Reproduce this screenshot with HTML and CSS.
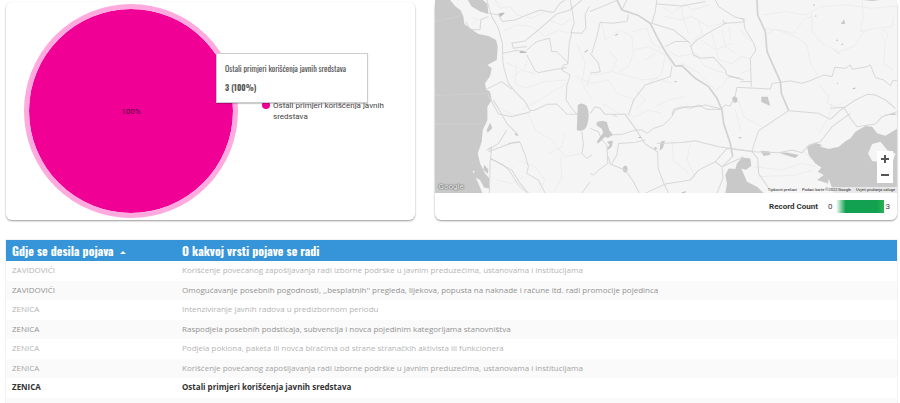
FILE: index.html
```html
<!DOCTYPE html>
<html lang="bs">
<head>
  <meta charset="UTF-8">
  <meta name="viewport" content="width=device-width, initial-scale=1">
  <title>Javni resursi</title>
  <link rel="stylesheet" href="styles.css">
</head>
<body>
  <main class="report">
    <div class="cards">
      <section class="card pie-card">
        <div class="pie-wrap">
          <div class="pie"><span>100%</span></div>
          <div class="tooltip">
            <p>Ostali primjeri korišćenja javnih sredstava</p>
            <strong>3 (100%)</strong>
          </div>
        </div>
        <div class="legend">
          <span class="dot"></span>
          <span>Ostali primjeri korišćenja javnih sredstava</span>
        </div>
      </section>

      <section class="card map-card">
        <div class="map">
          <svg class="map-svg" viewBox="0 0 1386 579" preserveAspectRatio="xMidYMid slice" aria-hidden="true">
            <!-- minor roads -->
            <g class="minor">
              <path d="M180 0L195 25 225 20 245 45 290 55 330 35 350 40"/>
              <path d="M205 92L245 75 290 80 330 110 370 90 400 100"/>
              <path d="M215 190L245 200 240 250 270 265 330 245 395 240"/>
              <path d="M225 235L260 210 300 222 M270 205L275 180"/>
              <path d="M190 320L230 345 280 340 300 390 350 420 390 470 440 460"/>
              <path d="M260 330L330 290 395 250 M340 60L380 75 405 60"/>
              <path d="M250 480L300 500 330 540 310 579 M185 540L230 550 265 530"/>
              <path d="M375 470L380 530 355 579 M390 400L380 440 340 460"/>
              <path d="M420 230L470 250 520 240 545 280 600 300"/>
              <path d="M425 130L450 190 440 250 470 300 M470 210L455 260"/>
              <path d="M500 70L510 120 555 90 590 110 595 160 580 200 550 215"/>
              <path d="M480 225L530 215 570 225 620 240 665 235 710 250"/>
              <path d="M590 95L635 85 650 130 690 150 710 200"/>
              <path d="M595 150L640 140 690 165 680 220 640 250"/>
              <path d="M630 180L660 160 M520 150L545 180 530 215"/>
              <path d="M680 20L710 40 750 10 770 30 820 15"/>
              <path d="M690 50L740 60 770 50 820 80 860 70"/>
              <path d="M740 20L745 60 760 100 M790 60L800 100 775 120"/>
              <path d="M700 155L730 170 780 160 810 200 870 220"/>
              <path d="M740 190L785 215 840 270 860 260 880 230"/>
              <path d="M800 120L840 150 890 130 M860 90L870 140 900 160"/>
              <path d="M830 100L850 180 890 190 920 170 M880 80L885 120"/>
              <path d="M600 270L630 300 600 330 M660 320L700 300 750 290"/>
              <path d="M500 310L560 345 M560 340L600 350 640 330 680 340"/>
              <path d="M710 420L715 480 760 520 M765 430L755 480 780 530"/>
              <path d="M910 300L925 350 980 380 M900 330L915 390"/>
              <path d="M985 45L1050 35 1110 45 1160 20 1230 15 1310 25 1386 18"/>
              <path d="M985 85L1030 90 1075 100 1110 55 1130 50"/>
              <path d="M1000 100L1020 88 1090 115 1115 135 1125 190 1145 225"/>
              <path d="M1130 40L1130 95 1160 130 1210 155 1255 140 1290 90"/>
              <path d="M1280 0L1283 55 1275 95 1320 85 1370 80 1375 50"/>
              <path d="M1338 90Q1360 90 1355 115Q1340 125 1338 100M1350 120L1345 190 1375 210"/>
              <path d="M1150 250L1180 290 1175 310 1200 320 1240 300"/>
              <path d="M955 500L1040 510 1100 490 1145 500 M970 530L1080 525 1130 510"/>
              <path d="M1100 450L1130 480 M1150 400L1180 350 1190 310"/>
              <path d="M915 90L940 120 M915 170L945 175 M915 220L945 210"/>
              <path d="M15 10L30 12 M110 50L125 60 110 75 M120 60L145 55"/>
            </g>
            <!-- water -->
            <g class="water">
              <path d="M45 0L60 18 77 32 85 50 88 72 105 85 130 102 160 108 183 120 188 140 185 180 157 195 170 205 165 228 150 250 153 268 165 275 170 300 157 320 157 360 143 390 140 425 128 460 135 490 150 520 163 535 162 565 147 562 135 540 122 532 130 550 142 579H0V0Z"/>
              <path d="M98 0H143L157 13 160 42 135 35 110 20Z"/>
              <path d="M165 368L172 384 158 398 155 390Z M147 494L160 508 158 522 145 508Z"/>
              <path d="M428 315Q440 304 455 318Q466 345 455 378Q448 396 425 391L426 360Z"/>
              <path d="M485 366L502 362 515 366 522 390 533 404 518 414 510 410 488 431 485 424 504 398 500 386 484 376Z"/>
              <path d="M515 425L533 421 530 440 518 450 516 443 524 435Z"/>
              <ellipse cx="570" cy="507" rx="7" ry="10"/>
              <path d="M676 425L689 421 683 444 673 452Z M658 440L666 444 662 450 657 446Z"/>
              <path d="M890 294L898 288 906 294 906 306 896 309Z"/>
              <path d="M978 290L997 290 1005 318 978 306Z"/>
              <path d="M1216 72L1226 58 1229 72Z M1187 144L1218 165 1208 160Z M1280 0H1335L1310 3Z"/>
              <path d="M720 80L727 76 M1345 345L1375 340 1386 345Z"/>
              <path d="M870 579L875 550 870 525 880 505 900 507 905 490 920 472 945 475 948 497 932 509 918 505 935 545 965 560 985 579Z"/>
              <path d="M975 452L1003 454 1005 464 985 468Z M1030 457L1055 457 1090 465 1080 474 1045 463Z"/>
              <path d="M1115 440L1140 428 1175 440 1215 430 1245 415 1260 395 1290 378 1310 380 1325 400 1350 407 1386 385V579H1195L1180 535 1178 550 1145 540 1165 525 1147 515 1158 502 1140 490 1120 465Z"/>
            </g>
            <g class="land">
              <path d="M1153 439L1180 425 1210 410 1244 397 1240 415 1210 440 1180 447Z"/>
              <path d="M1298 460L1310 432 1335 425 1355 450 1380 460 1370 490 1310 483Z"/>
              <circle cx="116" cy="515" r="3"/>
            </g>
            <path class="sealine" d="M0 65L75 48M0 287L165 280M0 372H155"/>
            <!-- main roads -->
            <g class="road">
              <path d="M155 0L170 50 190 85 202 130 203 180 207 205 220 250 240 275 270 305 285 332 300 330 335 313 365 312 395 342 425 343"/>
              <path d="M203 160L240 152 275 155 M230 127L235 145 275 140"/>
              <path d="M160 40L190 45 202 65 240 60 275 45 315 30 355 38 375 10 390 0"/>
              <path d="M230 130L270 123 310 90 365 42 405 30 440 0"/>
              <path d="M153 268L200 245 230 268 M160 285L190 342 230 350 270 340 285 335"/>
              <path d="M175 300L198 340 215 370 250 405 M215 390L190 430 160 450"/>
              <path d="M160 455L200 440 235 427 255 425 M165 475L230 510 255 550 280 579"/>
              <path d="M155 450L170 440 165 490 163 579"/>
              <path d="M465 340L480 320 495 325 510 343 570 343 600 385 630 432 667 455 669 505 688 555 700 579"/>
              <path d="M465 160L490 190 495 215 465 220"/>
              <path class="wide" d="M545 0L560 30 610 47 645 70 665 110 690 155 720 198 740 197 780 235 820 260 845 295 860 330 865 370 885 430 892 470"/>
              <path d="M560 30L575 0M580 45L575 65 530 70 495 67 485 110 470 160"/>
              <path d="M665 0L660 35 650 70 715 90 765 130 M690 140L720 125 760 125"/>
              <path d="M665 12L740 18 810 5 M465 35L550 0"/>
              <path d="M765 140L785 120 835 90 875 68 M765 135L775 165 795 175 835 172 870 210 875 225 925 240"/>
              <path d="M710 200L705 230 630 255 595 300 580 345"/>
              <path d="M665 430L740 427 780 422 850 440 900 447 955 454"/>
              <path d="M520 470L525 492 570 510 595 545 612 579 M630 579L690 552 765 540 790 510 840 485 875 445 955 455"/>
              <path d="M840 485L860 500 925 470 M892 470L860 500 863 535 845 579"/>
              <path d="M550 430L600 427 630 420 M550 430L545 465 530 490"/>
              <path class="wide" d="M965 0L967 45 990 95 995 155 1035 245 1038 280 1060 332"/>
              <path d="M1060 332L1025 355 970 392 955 435 950 455 967 475 970 520 1010 579"/>
              <path d="M1060 332L1150 340 1185 358 1215 330 1260 300 1295 283 1320 285 1350 300 1380 325"/>
              <path d="M1185 325L1225 322 1245 355 1265 380 1320 372 1340 350 1386 335"/>
              <path d="M955 455L1030 458 1070 450 1100 458 1120 435 1155 425 1190 380 1245 340"/>
            </g>
            <!-- borders -->
            <g class="border">
              <path d="M92 65L105 88 135 90 137 60 160 50"/>
              <path d="M405 0L412 35 417 70 407 98 440 100 452 85 450 45 462 20"/>
              <path d="M410 98L402 130 400 165 398 192 385 195 380 210 405 225 395 258 393 300 410 325 425 342"/>
              <path d="M400 190L365 155 350 155 343 115 305 125 275 150 M275 165L300 212 310 218 350 210 395 203"/>
              <path d="M440 395L445 435 440 460 455 475 470 465"/>
              <path d="M165 475L180 482 205 495 225 515 250 555 275 579 M220 430L255 427 270 465 280 500 275 520 310 540 330 579"/>
              <path d="M465 385L490 395 500 420 515 435 518 490 490 510 475 525 465 520"/>
              <path d="M525 405L560 403 600 390 620 390 635 400 655 385 685 375 710 350 720 330 755 320 785 320 810 315 855 326"/>
              <path d="M710 345L715 328 740 320 765 325 790 315 815 328 855 328 870 315 885 318 900 285 905 262 1005 267 1010 250 1035 247"/>
              <path d="M840 0L850 20 900 52 925 58 928 85 955 130 962 150 945 175 948 260"/>
              <path d="M863 60L865 70 905 68 928 65 M880 230L915 235 M915 245H947 M915 55L930 58"/>
              <path d="M1035 247L1065 243 1100 250 1130 240 1165 225 1190 230 1198 202 1230 205 1245 195 1250 208 1295 200 1305 195 1320 233 1345 240 1365 257 1372 242 1386 242"/>
              <path d="M440 579L465 545 M535 345L545 350"/>
            </g>
            <!-- towns -->
            <g class="town">
              <path d="M192 42L207 39 197 49Z M258 154L272 158 255 158Z M240 400L247 408M540 107L548 102M718 245H724M448 157L458 150M1135 13L1137 18M1139 48H1143M1203 121H1208M1218 133H1223M1205 250H1208M1252 266L1260 264M610 412H618M740 578L752 575M910 413H918"/>
            </g>
          </svg>
          <span class="google">Google</span>
          <div class="zoom">
            <button type="button" aria-label="Zoom in"><svg viewBox="0 0 16 16"><path d="M8 4v8M4 8h8"/></svg></button>
            <button type="button" aria-label="Zoom out"><svg viewBox="0 0 16 16"><path d="M4 8h8"/></svg></button>
          </div>
          <div class="attribution">
            <a href="#">Tipkovni prečaci</a>
            <span>Podaci karte ©2022 Google</span>
            <a href="#">Uvjeti pružanja usluge</a>
          </div>
        </div>
        <div class="scale">
          <strong>Record Count</strong>
          <span>0</span>
          <div class="scale-bar"></div>
          <span>3</span>
        </div>
      </section>
    </div>

    <div class="table-wrap">
      <table>
        <thead>
          <tr>
            <th class="place">Gdje se desila pojava <span class="sort"></span></th>
            <th>O kakvoj vrsti pojave se radi</th>
          </tr>
        </thead>
        <tbody>
          <tr><td>ZAVIDOVIĆI</td><td>Korišćenje povećanog zapošljavanja radi izborne podrške u javnim preduzećima, ustanovama i institucijama</td></tr>
          <tr class="mid"><td>ZAVIDOVIĆI</td><td>Omogućavanje posebnih pogodnosti, ,,besplatnih'' pregleda, lijekova, popusta na naknade i račune itd. radi promocije pojedinca</td></tr>
          <tr><td>ZENICA</td><td>Intenziviranje javnih radova u predizbornom periodu</td></tr>
          <tr class="mid"><td>ZENICA</td><td>Raspodjela posebnih podsticaja, subvencija i novca pojedinim kategorijama stanovništva</td></tr>
          <tr><td>ZENICA</td><td>Podjela poklona, paketa ili novca biračima od strane stranačkih aktivista ili funkcionera</td></tr>
          <tr><td>ZENICA</td><td>Korišćenje povećanog zapošljavanja radi izborne podrške u javnim preduzećima, ustanovama i institucijama</td></tr>
          <tr class="selected"><td>ZENICA</td><td>Ostali primjeri korišćenja javnih sredstava</td></tr>
        </tbody>
      </table>
      <div class="table-end"></div>
    </div>
  </main>
</body>
</html>
```

FILE: styles.css
```css
* { margin: 0; padding: 0; box-sizing: border-box; }
html { overflow: hidden; }
body {
  font-family: Roboto, sans-serif;
  font-size: 8px;
  background: #fff;
  color: #444;
}
button { border: none; cursor: pointer; }
a { color: inherit; text-decoration: none; }
.report { padding: 0 3px 0 6px; }
.cards {
  display: grid;
  grid-template-columns: 409fr 463fr;
  gap: 20px;
}
.card {
  background: #fff;
  border-radius: 6px;
  box-shadow: 0 1px 2px rgba(0,0,0,0.4);
}

/* pie chart */
.pie-card {
  display: flex;
  align-items: center;
  margin-top: 2px;
  padding: 2px 24px 2px 18px;
  gap: 24px;
}
.pie-wrap { position: relative; }
.pie {
  width: 214px;
  height: 214px;
  border: 5px solid #ffaadf;
  border-radius: 50%;
  background: #f10096;
  background-clip: padding-box;
  display: flex;
  align-items: center;
  justify-content: center;
  color: #4a0c34;
}
.tooltip {
  position: absolute;
  left: 192px;
  top: 49px;
  z-index: 1;
  width: 152px;
  padding: 9px 8px;
  background: #fff;
  border: 1px solid #ccc;
  box-shadow: 0 1px 1px rgba(0,0,0,0.2);
  font-family: Oswald, "Liberation Sans Narrow", "Liberation Sans", sans-serif;
  line-height: 11px;
  color: #555;
  white-space: nowrap;
}
.tooltip p { margin-bottom: 8px; }
.legend {
  display: flex;
  gap: 3px;
  line-height: 11px;
}
.dot {
  flex: none;
  width: 8px;
  height: 8px;
  margin-top: 1px;
  border-radius: 50%;
  background: #f10096;
}

/* map */
.map-card { display: flex; flex-direction: column; }
.map {
  position: relative;
  height: 193px;
  overflow: hidden;
  background: #f5f5f5;
}
.map-svg { display: block; width: 100%; height: 100%; }
.map-svg path { stroke-linejoin: round; }
.minor { fill: none; stroke: #e8e8e8; stroke-width: 2; }
.water { fill: #c9c9c9; }
.land { fill: #f5f5f5; }
.sealine { fill: none; stroke: #d2d2d2; stroke-width: 2; }
.road { fill: none; stroke: #d8d8d8; stroke-width: 3; }
.road .wide { stroke: #d2d2d2; stroke-width: 5; }
.border { fill: none; stroke: #c8c8c8; stroke-width: 2; }
.town { fill: #bbb; stroke: #bbb; stroke-width: 3; }
.google {
  position: absolute;
  left: 4px;
  bottom: 0;
  font-size: 8px;
  line-height: 12px;
  color: #fff;
  text-shadow: 0 0 1px #555, 0 0 1px #555, 0 0 2px #777;
}
.zoom {
  position: absolute;
  right: 4px;
  bottom: 10px;
  width: 16px;
  background: #fff;
}
.zoom button {
  display: block;
  width: 16px;
  height: 16px;
  background: #fff;
}
.zoom svg {
  display: block;
  fill: none;
  stroke: #555;
  stroke-width: 2;
}
.attribution {
  position: absolute;
  right: 0;
  bottom: 0;
  display: flex;
  gap: 5px;
  padding: 0 2px;
  background: rgba(245,245,245,0.7);
  font-size: 4px;
  line-height: 6px;
  color: #222;
}
.scale {
  flex: 1;
  display: flex;
  align-items: center;
  justify-content: flex-end;
  padding-right: 7px;
}
.scale strong { margin-right: 10px; color: #333; }
.scale-bar {
  width: 48px;
  height: 13px;
  margin: 0 2px 0 3px;
  background: linear-gradient(to right, #fff, #12a150 20%, #12a150 85%, #2cb052);
}

/* table */
.table-wrap {
  margin-top: 20px;
  box-shadow: 0 0 1px rgba(0,0,0,0.3);
}
table {
  width: 100%;
  border-collapse: collapse;
  font-family: "Open Sans", sans-serif;
  font-size: 8px;
  color: #b4b4b4;
}
th {
  height: 21px;
  padding: 0 6px;
  background: #3694d9;
  color: #fff;
  font-family: Oswald, "Liberation Sans Narrow", "Liberation Sans", sans-serif;
  font-size: 12px;
  line-height: 16px;
  text-align: left;
  white-space: nowrap;
}
.place { width: 170px; }
.sort {
  display: inline-block;
  margin-left: 3px;
  border: 3px solid transparent;
  border-top: none;
  border-bottom-color: #fff;
  vertical-align: middle;
}
td {
  height: 20px;
  padding: 0 6px 2px;
  line-height: 12px;
}
tbody tr:nth-child(even) { background: #fafafa; }
tbody tr:nth-child(even) td { height: 19px; color: #a4a4a4; }
tbody tr.mid td { color: #929292; }
.selected td { color: #333; font-weight: 700; }
.table-end { height: 5px; background: #fafafa; }
```
